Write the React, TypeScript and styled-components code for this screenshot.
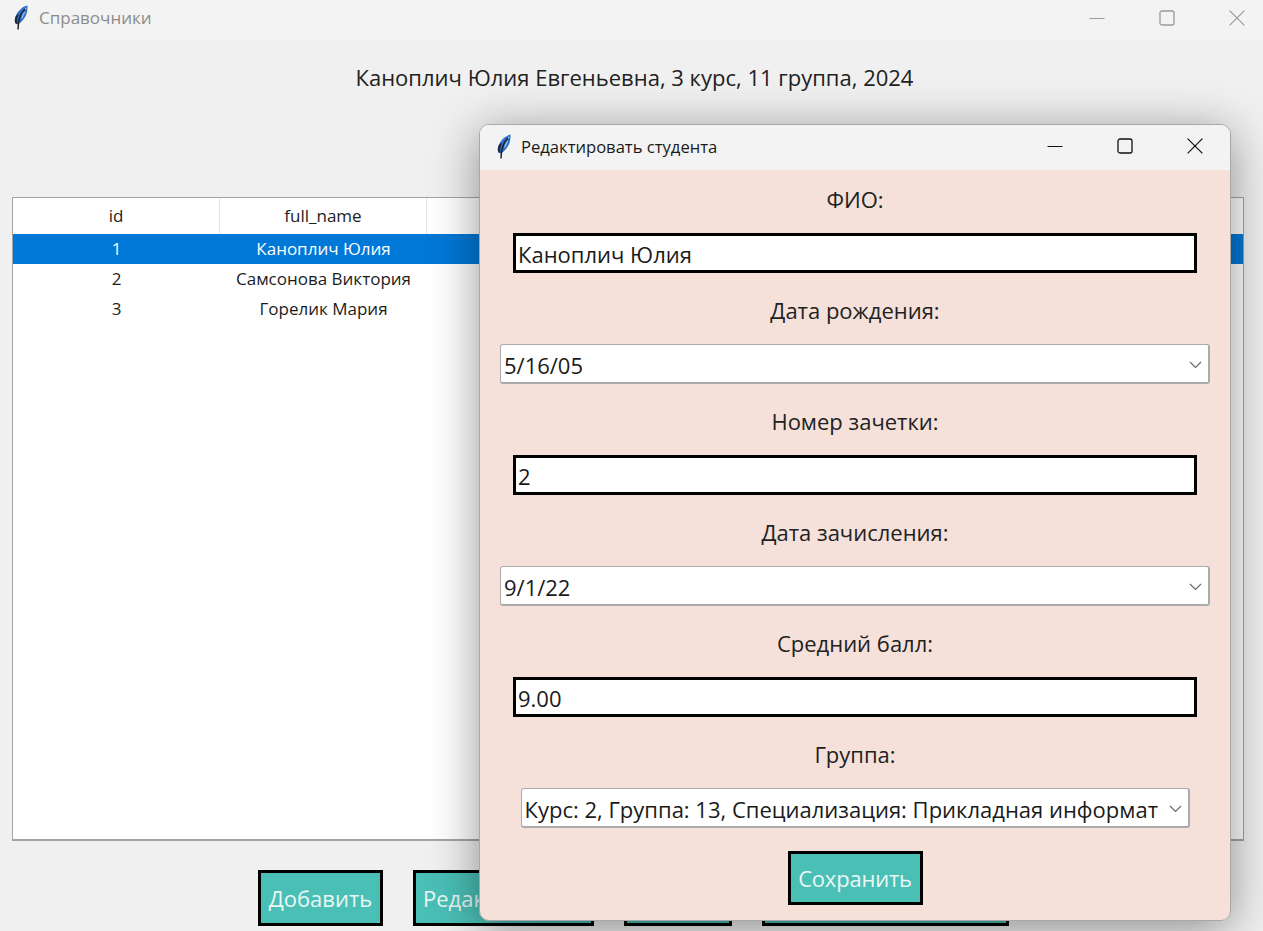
import React from "react";
import styled, { createGlobalStyle } from "styled-components";

const GlobalStyle = createGlobalStyle`
  html, body {
    margin: 0;
    padding: 0;
    background: #f0f0f0;
  }
  * {
    box-sizing: border-box;
  }
`;

const FONT = `"Open Sans", "Noto Sans", "Liberation Sans", sans-serif`;

const Desktop = styled.div`
  position: relative;
  width: 1263px;
  height: 931px;
  overflow: hidden;
  background: #f0f0f0;
  font-family: ${FONT};
  color: #1a1a1a;
`;

const TitleBar = styled.div<{ $inactive?: boolean }>`
  display: flex;
  align-items: center;
  flex: none;
  background: #f3f3f3;
  color: ${(p) => (p.$inactive ? "#8c8c8c" : "#1a1a1a")};
`;

const MainBar = styled(TitleBar)`
  height: 41px;
  padding: 0 0 6px 13px;
`;

const DialogBar = styled(TitleBar)`
  height: 45px;
  padding: 0 0 3px 16px;
`;

const TitleText = styled.span<{ $gap: number; $size: number }>`
  flex: 1;
  margin-left: ${(p) => p.$gap}px;
  font-size: ${(p) => p.$size}px;
  white-space: nowrap;
`;

const Controls = styled.div<{ $muted?: boolean }>`
  display: flex;
  margin-right: ${(p) => (p.$muted ? "-9px" : "0")};
  color: ${(p) => (p.$muted ? "#9a9a9a" : "#111111")};
`;

const ControlButton = styled.div`
  width: 70px;
  height: 30px;
  display: flex;
  align-items: center;
  justify-content: center;
`;

const Heading = styled.div`
  height: 156px;
  padding: 21px 0 0 6px;
  text-align: center;
  font-size: 22px;
  line-height: 30px;
  color: #222222;
`;

const TableFrame = styled.div`
  margin: 0 19px 0 12px;
  height: 644px;
  border: 2px solid #a4a4a4;
  border-width: 1px 1px 2px 1px;
  background: #ffffff;
  overflow: hidden;
`;

const Row = styled.div<{ $selected?: boolean; $header?: boolean }>`
  display: grid;
  grid-template-columns: repeat(6, 207px);
  height: ${(p) => (p.$header ? "36px" : "30px")};
  padding-bottom: 2px;
  align-items: center;
  background: ${(p) => (p.$selected ? "#0078d7" : "#ffffff")};
  color: ${(p) => (p.$selected ? "#ffffff" : "#1c1c1c")};
  font-size: 17px;
  text-align: center;
`;

const HeaderRow = styled(Row)`
  padding-bottom: 0;
`;

const HeaderCell = styled.div`
  height: 100%;
  padding-bottom: 2px;
  display: flex;
  align-items: center;
  justify-content: center;
  border-right: 1px solid #e5e5e5;
`;

const ActionRow = styled.div`
  display: flex;
  margin-top: 29px;
  padding-left: 258px;
  gap: 30px;
`;

const TealButton = styled.div<{ $width: number }>`
  width: ${(p) => p.$width}px;
  height: 56px;
  display: flex;
  align-items: center;
  justify-content: center;
  flex: none;
  border: 3px solid #000000;
  background: #4abfb6;
  color: #e9f7f5;
  font-size: 22px;
  white-space: nowrap;
`;

const SaveButton = styled(TealButton)`
  height: 54px;
  letter-spacing: -0.2px;
`;

const DialogWindow = styled.div`
  position: absolute;
  left: 479px;
  top: 124px;
  width: 752px;
  height: 797px;
  display: flex;
  flex-direction: column;
  border: 1px solid #a8a8a8;
  border-radius: 10px;
  overflow: hidden;
  background: #f5e1da;
`;

const DialogShadow = styled.div`
  position: absolute;
  left: 479px;
  top: 124px;
  width: 752px;
  height: 797px;
  border-radius: 10px;
  box-shadow: 0 8px 48px rgba(0, 0, 0, 0.42);
`;

const DialogBody = styled.div`
  flex: 1;
  display: flex;
  flex-direction: column;
  align-items: center;
  padding-top: 15px;
  gap: 23px;
`;

const Field = styled.div`
  display: flex;
  flex-direction: column;
  align-items: center;
  gap: 18px;
`;

const FieldLabel = styled.div`
  height: 30px;
  padding-bottom: 2px;
  line-height: 28px;
  font-size: 22px;
  color: #222222;
`;

const Entry = styled.div`
  width: 684px;
  height: 40px;
  padding: 2px 0 0 2px;
  display: flex;
  align-items: center;
  border: 3px solid #000000;
  background: #ffffff;
  font-size: 22px;
  color: #1a1a1a;
`;

const SelectBox = styled.div<{ $width: number }>`
  width: ${(p) => p.$width}px;
  height: 40px;
  padding: 2px 6px 0 3px;
  display: flex;
  align-items: center;
  justify-content: space-between;
  border: 1px solid #ababab;
  border-width: 1px 2px 2px 1px;
  border-radius: 3px;
  background: #ffffff;
  font-size: 22px;
  color: #1a1a1a;
  white-space: nowrap;
`;

const SelectText = styled.span`
  overflow: hidden;
`;

const Feather = () => (
  <svg width="16" height="25" viewBox="0 0 16 25">
    <path d="M14.4 0.6 C9.5 1.5 4.8 6 2.8 11 C1.6 14 1.4 16.5 2.6 18.6 L5 19.4 C8.6 17.5 12 13.5 13.6 8.8 C14.4 6 14.7 3 14.4 0.6 Z" fill="#2f6fc8" />
    <path d="M13.2 3 C11 5 9 8 8 11 M11.8 7 C10.5 9 9.5 11 8.6 13.5" stroke="#9cc6f2" strokeWidth="1.1" fill="none" />
    <path d="M2.8 11 C1.6 14 1.4 16.5 2.6 18.6 L4.2 19 C3.8 15.5 4.4 12 6.2 8.5 Z" fill="#1c2a3e" />
    <path d="M12 4 C8 8 5 14 5 24.5" stroke="#141c26" strokeWidth="1.4" fill="none" />
  </svg>
);

const WindowControls = ({ muted }: { muted?: boolean }) => (
  <Controls $muted={muted}>
    <ControlButton>
      <svg width="16" height="16" viewBox="0 0 16 16">
        <path d="M0.5 8.5 H15.5" stroke="currentColor" strokeWidth="1" />
      </svg>
    </ControlButton>
    <ControlButton>
      <svg width="16" height="16" viewBox="0 0 16 16">
        <rect x="1" y="1" width="14" height="14" rx="2" stroke="currentColor" strokeWidth="1.3" fill="none" />
      </svg>
    </ControlButton>
    <ControlButton>
      <svg width="16" height="16" viewBox="0 0 16 16">
        <path d="M0.6 0.6 L15.4 15.4 M15.4 0.6 L0.6 15.4" stroke="currentColor" strokeWidth="1.2" />
      </svg>
    </ControlButton>
  </Controls>
);

const Chevron = () => (
  <svg width="13" height="8" viewBox="0 0 13 8">
    <path d="M1 1 L6.5 6.5 L12 1" stroke="#6a6a6a" strokeWidth="1.2" fill="none" />
  </svg>
);

const students = [
  { id: 1, name: "Каноплич Юлия" },
  { id: 2, name: "Самсонова Виктория" },
  { id: 3, name: "Горелик Мария" },
];

const App: React.FC = () => {
  return (
    <Desktop>
      <GlobalStyle />
      <MainBar $inactive>
        <Feather />
        <TitleText $gap={10} $size={17}>Справочники</TitleText>
        <WindowControls muted />
      </MainBar>
      <Heading>Каноплич Юлия Евгеньевна, 3 курс, 11 группа, 2024</Heading>
      <TableFrame>
        <HeaderRow $header>
          <HeaderCell>id</HeaderCell>
          <HeaderCell>full_name</HeaderCell>
          <HeaderCell />
          <HeaderCell />
          <HeaderCell />
          <HeaderCell />
        </HeaderRow>
        {students.map((s) => (
          <Row key={s.id} $selected={s.id === 1}>
            <div>{s.id}</div>
            <div>{s.name}</div>
          </Row>
        ))}
      </TableFrame>
      <ActionRow>
        <TealButton $width={125}>Добавить</TealButton>
        <TealButton $width={181}>Редактировать</TealButton>
        <TealButton $width={108}>Удалить</TealButton>
        <TealButton $width={247} />
      </ActionRow>
      <DialogShadow />
      <DialogWindow>
        <DialogBar>
          <Feather />
          <TitleText $gap={9} $size={16.6}>Редактировать студента</TitleText>
          <WindowControls />
        </DialogBar>
        <DialogBody>
          <Field>
            <FieldLabel>ФИО:</FieldLabel>
            <Entry>Каноплич Юлия</Entry>
          </Field>
          <Field>
            <FieldLabel>Дата рождения:</FieldLabel>
            <SelectBox $width={710}>
              <SelectText>5/16/05</SelectText>
              <Chevron />
            </SelectBox>
          </Field>
          <Field>
            <FieldLabel>Номер зачетки:</FieldLabel>
            <Entry>2</Entry>
          </Field>
          <Field>
            <FieldLabel>Дата зачисления:</FieldLabel>
            <SelectBox $width={710}>
              <SelectText>9/1/22</SelectText>
              <Chevron />
            </SelectBox>
          </Field>
          <Field>
            <FieldLabel>Средний балл:</FieldLabel>
            <Entry>9.00</Entry>
          </Field>
          <Field>
            <FieldLabel>Группа:</FieldLabel>
            <SelectBox $width={669}>
              <SelectText>Курс: 2, Группа: 13, Специализация: Прикладная информат</SelectText>
              <Chevron />
            </SelectBox>
          </Field>
          <SaveButton $width={135}>Сохранить</SaveButton>
        </DialogBody>
      </DialogWindow>
    </Desktop>
  );
};

export default App;
